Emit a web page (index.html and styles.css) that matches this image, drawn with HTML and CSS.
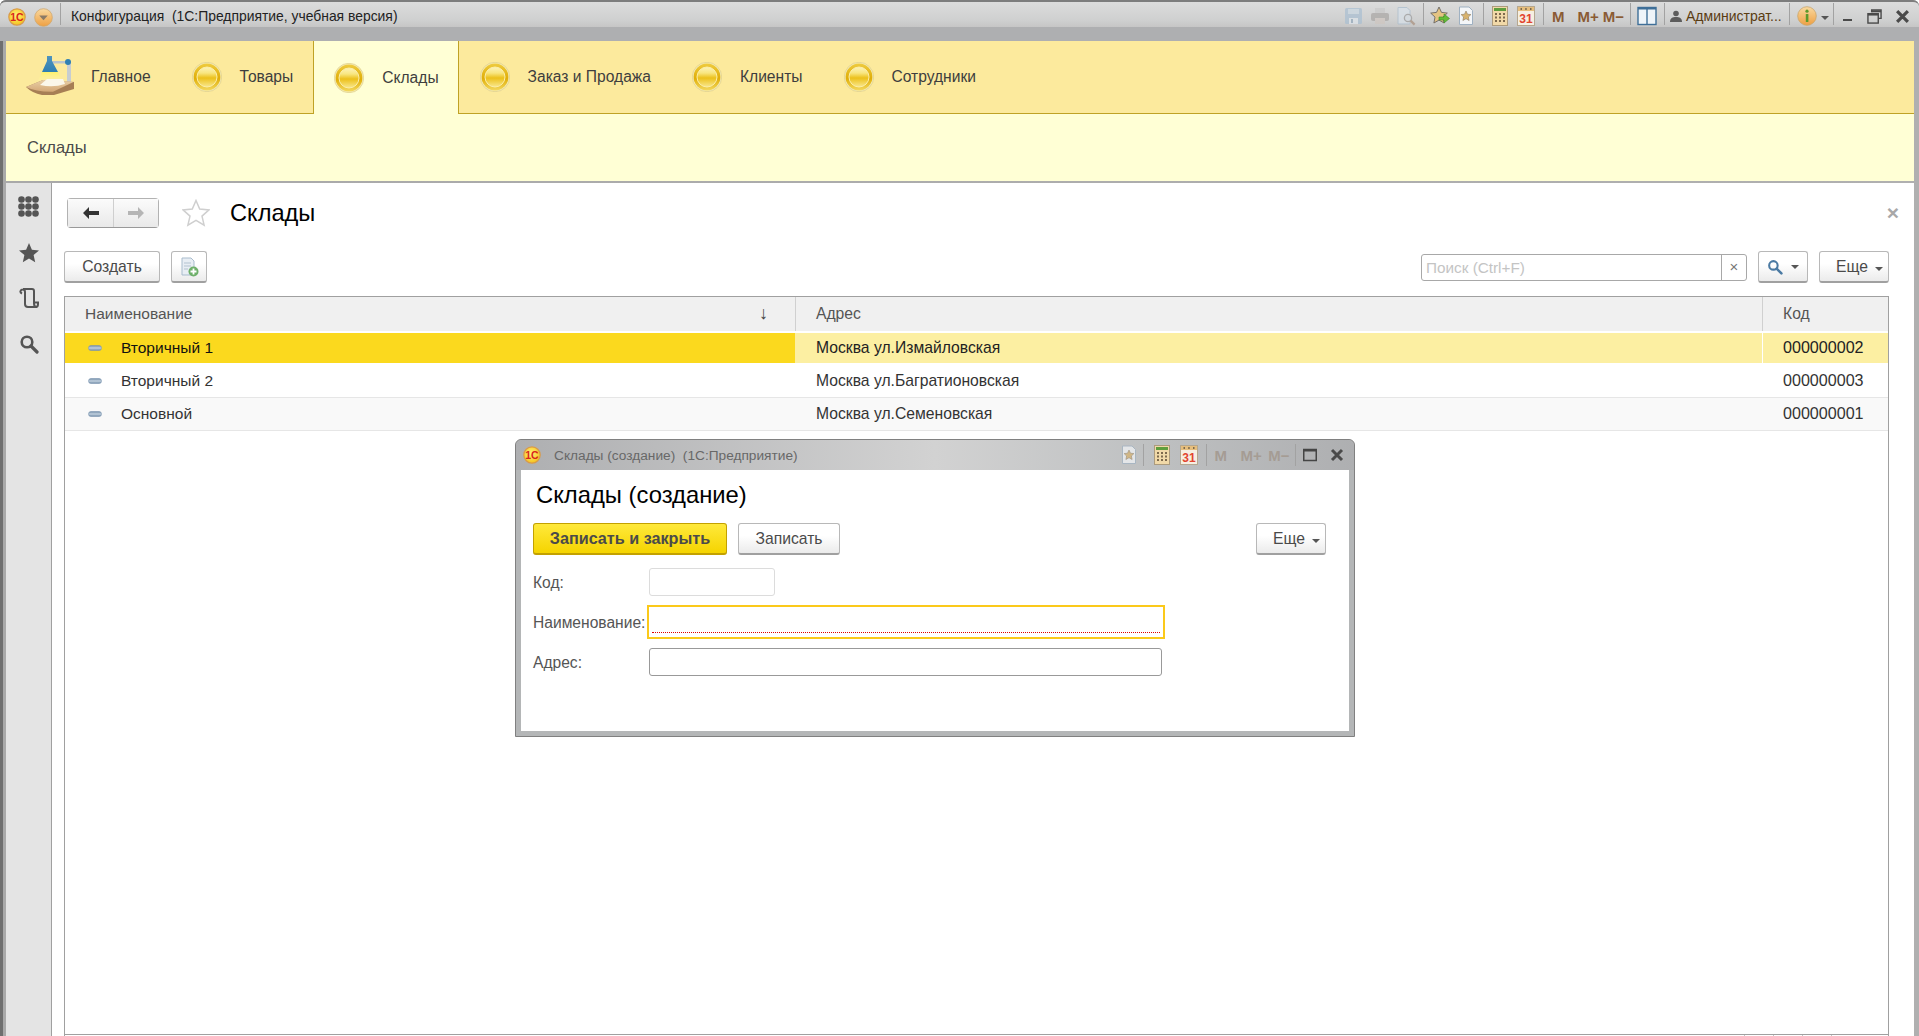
FILE: index.html
```html
<!DOCTYPE html>
<html lang="ru">
<head>
    <meta charset="UTF-8">
    <meta name="viewport" content="width=device-width, initial-scale=1.0">
    <title>Конфигурация (1С:Предприятие, учебная версия)</title>
    <link rel="stylesheet" href="styles.css">
</head>
<body>
    <!-- Shared icons -->
    <svg class="svg-defs" aria-hidden="true">
        <defs>
            <linearGradient id="goldOuter" x1="0" y1="0" x2="0" y2="1">
                <stop offset="0" stop-color="#eecb40"/>
                <stop offset="0.55" stop-color="#e0ae08"/>
                <stop offset="1" stop-color="#f3d85e"/>
            </linearGradient>
            <linearGradient id="goldInner" x1="0" y1="0" x2="0" y2="1">
                <stop offset="0" stop-color="#fdf3b8"/>
                <stop offset="0.3" stop-color="#f8e680"/>
                <stop offset="0.55" stop-color="#ecc01a"/>
                <stop offset="1" stop-color="#f9e88e"/>
            </linearGradient>
            <radialGradient id="logoFill" cx="0.45" cy="0.4" r="0.6">
                <stop offset="0" stop-color="#fff27a"/>
                <stop offset="1" stop-color="#f5c21c"/>
            </radialGradient>
            <linearGradient id="orangeFill" x1="0" y1="0" x2="0" y2="1">
                <stop offset="0" stop-color="#f9d9a0"/>
                <stop offset="1" stop-color="#eea043"/>
            </linearGradient>
            <linearGradient id="deskTop" x1="0" y1="0" x2="0" y2="1">
                <stop offset="0" stop-color="#e9cfa5"/>
                <stop offset="1" stop-color="#d3a877"/>
            </linearGradient>
            <linearGradient id="shade" x1="0" y1="0" x2="0" y2="1">
                <stop offset="0" stop-color="#4f94bd"/>
                <stop offset="1" stop-color="#2f7fb2"/>
            </linearGradient>
            <linearGradient id="beam" x1="0" y1="0" x2="0" y2="1">
                <stop offset="0" stop-color="#fff26a"/>
                <stop offset="1" stop-color="#fff5a8" stop-opacity="0.3"/>
            </linearGradient>
            <linearGradient id="pill" x1="0" y1="0" x2="0" y2="1">
                <stop offset="0" stop-color="#6f8aa5"/>
                <stop offset="0.5" stop-color="#c2d1df"/>
                <stop offset="1" stop-color="#6f8aa5"/>
            </linearGradient>
        </defs>

        <symbol id="i-gold" viewBox="0 0 30 30">
            <circle cx="15" cy="15" r="14.700" fill="#f7eeb8" stroke="#d6c680" stroke-width="0.600"/>
            <circle cx="15" cy="15" r="13.400" fill="url(#goldOuter)"/>
            <circle cx="15" cy="15" r="10" fill="url(#goldInner)" stroke="#fbeeaa"/>
        </symbol>
        <symbol id="i-save" viewBox="0 0 20 20">
            <rect x="1" y="2" width="17" height="16" rx="1.500" fill="#a9bfd2"/>
            <rect x="4" y="3" width="11" height="5" fill="#c9d7e2"/>
            <rect x="5" y="12" width="9" height="6" fill="#dfe6ec"/>
            <rect x="7" y="13" width="2" height="4" fill="#93a9bc"/>
        </symbol>
        <symbol id="i-print" viewBox="0 0 20 20">
            <rect x="5" y="2" width="10" height="6" fill="#c9c9c9"/>
            <rect x="1" y="7" width="18" height="8" rx="2" fill="#a9a6a4"/>
            <rect x="5" y="12" width="10" height="6" fill="#cfc6c0"/>
        </symbol>
        <symbol id="i-preview" viewBox="0 0 20 20">
            <path d="M2 1.500h9l3 3v13.500h-12z" fill="#d9e2ea" stroke="#a9bccd"/>
            <circle cx="12" cy="12" r="3.600" fill="#d5dde4" stroke="#9a9a9a" stroke-width="1.300"/>
            <path d="M14.600 14.600l4 4" stroke="#a88f7c" stroke-width="2.200"/>
        </symbol>
        <symbol id="i-star-go" viewBox="0 0 20 20">
            <path d="M9 1l2.500 5.400 5.800.7-4.300 4 1.100 5.900-5.100-2.900-5.100 2.900 1.100-5.900-4.300-4 5.800-.7z" fill="#e4c483" stroke="#75706a"/>
            <path d="M9 11h5v-3l5.500 4.500-5.500 4.500v-3h-5z" fill="#63bd38" stroke="#3e8a22" stroke-width="0.600"/>
        </symbol>
        <symbol id="i-doc-star" viewBox="0 0 20 20">
            <path d="M3.500 1h9.500l3.500 3.500v14h-13z" fill="#f4f6f8" stroke="#9fb1c2"/>
            <path d="M10 5l1.500 3.200 3.400.4-2.500 2.400.7 3.500-3.100-1.800-3.100 1.800.7-3.500-2.500-2.400 3.400-.4z" fill="#d8b26c" stroke="#8a7a63" stroke-width="0.600"/>
        </symbol>
        <symbol id="i-calc" viewBox="0 0 20 20">
            <rect x="2.500" y="0.500" width="15" height="19" fill="#f1d9a8" stroke="#ac9b7d"/>
            <rect x="4" y="2" width="12" height="3" fill="#5f9e3d"/>
            <path d="M5 7h2v2h-2zM9 7h2v2h-2zM13 7h2v2h-2zM5 10.500h2v2h-2zM9 10.500h2v2h-2zM13 10.500h2v2h-2zM5 14h2v2h-2zM9 14h2v2h-2zM13 14h2v2h-2z" fill="#7d6a4e"/>
        </symbol>
        <symbol id="i-cal-page" viewBox="0 0 20 20">
            <rect x="1.500" y="0.500" width="17" height="19" fill="#f6efe2" stroke="#b5a78f"/>
            <rect x="2" y="1" width="16" height="4" fill="#e6be7d"/>
            <path d="M4.500 2h1.500v2h-1.500zM9.200 2h1.500v2h-1.500zM14 2h1.500v2h-1.500z" fill="#7d6a4e"/>
        </symbol>
        <symbol id="i-panel" viewBox="0 0 20 20">
            <rect x="1" y="1.500" width="18" height="17" fill="#eef4f9" stroke="#3f6f98" stroke-width="1.400"/>
            <rect x="1" y="1" width="18" height="2.500" fill="#3f6f98"/>
            <path d="M10 3v15" stroke="#3f6f98" stroke-width="1.400"/>
        </symbol>
        <symbol id="i-info" viewBox="0 0 20 20">
            <circle cx="10" cy="10" r="9.300" fill="url(#orangeFill)" stroke="#c9a66c" stroke-width="0.800"/>
            <rect x="8.800" y="8" width="2.600" height="8" rx="0.600" fill="#5d9a2c"/>
            <circle cx="10" cy="5.200" r="1.600" fill="#5d9a2c"/>
        </symbol>
        <symbol id="i-close" viewBox="0 0 14 14">
            <path d="M2 2l10 10M12 2l-10 10" stroke="#4a4a4a" stroke-width="3"/>
        </symbol>
        <symbol id="i-maximize" viewBox="0 0 14 14">
            <rect x="0.750" y="1.500" width="12.500" height="11" fill="none" stroke="#454545" stroke-width="1.500"/>
            <path d="M1 2.500h12" stroke="#454545" stroke-width="2"/>
        </symbol>
        <symbol id="i-search" viewBox="0 0 20 20">
            <circle cx="8" cy="8" r="5.300" fill="none" stroke="currentColor" stroke-width="2.600"/>
            <path d="M12 12l6 6" stroke="currentColor" stroke-width="3.200" stroke-linecap="round"/>
        </symbol>
        <symbol id="i-dash" viewBox="0 0 14 6">
            <rect x="0.500" y="0.500" width="13" height="5" rx="2.500" fill="url(#pill)" stroke="#7f99b3" stroke-width="0.600"/>
        </symbol>
    </svg>

    <div class="app">
        <!-- Main window title bar -->
        <header class="titlebar">
            <svg class="logo" viewBox="0 0 18 18">
                <circle cx="9" cy="9" r="8.200" fill="url(#logoFill)" stroke="#d99a4a" stroke-width="1.200"/>
                <text x="9" y="12.800" text-anchor="middle" class="logo-text">1С</text>
            </svg>
            <svg class="menu-ball" viewBox="0 0 20 20">
                <circle cx="10" cy="10" r="9.300" fill="url(#orangeFill)" stroke="#cfa66c" stroke-width="0.800"/>
                <path d="M5.500 8h9l-4.500 5z" fill="#8b7a66"/>
            </svg>
            <span class="title-sep"></span>
            <span class="window-title">Конфигурация&nbsp; (1С:Предприятие, учебная версия)</span>

            <div class="tools">
                <svg class="tool faded"><use href="#i-save"/></svg>
                <svg class="tool faded"><use href="#i-print"/></svg>
                <svg class="tool faded"><use href="#i-preview"/></svg>
                <span class="tool-sep"></span>
                <svg class="tool"><use href="#i-star-go"/></svg>
                <svg class="tool"><use href="#i-doc-star"/></svg>
                <span class="tool-sep"></span>
                <svg class="tool"><use href="#i-calc"/></svg>
                <svg class="tool" viewBox="0 0 20 20">
                    <use href="#i-cal-page"/>
                    <text x="10" y="17" text-anchor="middle" class="cal-text">31</text>
                </svg>
                <span class="tool-sep"></span>
                <span class="mem mem-m">M</span>
                <span class="mem">M+</span>
                <span class="mem">M−</span>
                <span class="tool-sep"></span>
                <svg class="tool"><use href="#i-panel"/></svg>
                <span class="tool-sep"></span>
                <svg class="user-icon" viewBox="0 0 12 12">
                    <circle cx="6" cy="3.500" r="2.800" fill="#5c5c5c"/>
                    <path d="M0 12c0-4 2.500-5 6-5s6 1 6 5z" fill="#5c5c5c"/>
                </svg>
                <span class="user-name">Администрат...</span>
                <span class="tool-sep"></span>
                <svg class="tool"><use href="#i-info"/></svg>
                <span class="caret"></span>
                <span class="tool-sep"></span>
                <span class="win-min"></span>
                <svg class="win-restore" viewBox="0 0 16 16">
                    <path d="M5 3.500v-2.500h10v9h-3" fill="none" stroke="#4a4a4a" stroke-width="1.500"/>
                    <path d="M5 2.500h10" stroke="#4a4a4a" stroke-width="2"/>
                    <rect x="1" y="5" width="11" height="10" fill="none" stroke="#4a4a4a" stroke-width="1.500"/>
                    <path d="M1 6h11" stroke="#4a4a4a" stroke-width="2"/>
                </svg>
                <svg class="win-close"><use href="#i-close"/></svg>
            </div>
        </header>

        <!-- Sections -->
        <nav class="sections">
            <a class="section">
                <svg class="lamp" viewBox="0 0 48 42">
                    <path d="M16 16h16l4 9h-24z" fill="url(#beam)"/>
                    <rect x="25" y="5" width="16" height="2.500" fill="#b9c4cb"/>
                    <rect x="41" y="6" width="4" height="20" fill="#c7cdd1"/>
                    <circle cx="42" cy="6" r="3" fill="#2f7fb2"/>
                    <path d="M21 0h5v5l6 11h-16l5-11z" fill="url(#shade)"/>
                    <path d="M0 31l17-7 31 2v7l-20 6h-12q-10-2-16-8z" fill="#a77f55"/>
                    <path d="M0 31l17-7 31 1.700-21 10q-17 .3-27-4.700z" fill="url(#deskTop)"/>
                    <path d="M14 29l7-6h16l2 5q-12 4-25 1z" fill="#fbf7ea"/>
                </svg>
                <span>Главное</span>
            </a>
            <a class="section"><svg class="ball"><use href="#i-gold"/></svg><span>Товары</span></a>
            <a class="section section-active"><svg class="ball"><use href="#i-gold"/></svg><span>Склады</span></a>
            <a class="section"><svg class="ball"><use href="#i-gold"/></svg><span>Заказ и Продажа</span></a>
            <a class="section"><svg class="ball"><use href="#i-gold"/></svg><span>Клиенты</span></a>
            <a class="section"><svg class="ball"><use href="#i-gold"/></svg><span>Сотрудники</span></a>
        </nav>

        <div class="subsections">Склады</div>

        <div class="workspace">
            <!-- Left panel -->
            <aside class="sidebar">
                <svg class="side-icon side-grid" viewBox="0 0 21 21">
                    <g fill="#555">
                        <circle cx="3.500" cy="3.500" r="3.300"/><circle cx="10.500" cy="3.500" r="3.300"/><circle cx="17.500" cy="3.500" r="3.300"/>
                        <circle cx="3.500" cy="10.500" r="3.300"/><circle cx="10.500" cy="10.500" r="3.300"/><circle cx="17.500" cy="10.500" r="3.300"/>
                        <circle cx="3.500" cy="17.500" r="3.300"/><circle cx="10.500" cy="17.500" r="3.300"/><circle cx="17.500" cy="17.500" r="3.300"/>
                    </g>
                </svg>
                <svg class="side-icon" viewBox="0 0 20 20">
                    <path d="M10 0l2.900 6.700 7.100.7-5.400 4.700 1.600 7.100-6.200-3.800-6.200 3.800 1.600-7.100-5.400-4.700 7.100-.7z" fill="#555"/>
                </svg>
                <svg class="side-icon" viewBox="0 0 20 20">
                    <path d="M4 1h9q2 0 2 2v12.500q0 3.500 3 3.500h-9q-3 0-3-3v-12q0-2.500-2-2.500t-2.500 1.500 1.500 2.500" fill="none" stroke="#555" stroke-width="2"/>
                    <path d="M15 14.500h4v1.500q0 3-2 3" fill="none" stroke="#555" stroke-width="2"/>
                </svg>
                <svg class="side-icon side-search"><use href="#i-search"/></svg>
            </aside>

            <main class="content">
                <div class="page-head">
                    <div class="history">
                        <button class="history-btn">
                            <svg class="arrow" viewBox="0 0 18 14"><path d="M1 7l6-6v4h10v4h-10v4z" fill="#333"/></svg>
                        </button>
                        <button class="history-btn">
                            <svg class="arrow" viewBox="0 0 18 14"><path d="M17 7l-6-6v4h-10v4h10v4z" fill="#b5b5b5"/></svg>
                        </button>
                    </div>
                    <svg class="fav-star" viewBox="0 0 28 28">
                        <path d="M14 1.500l3.700 8.500 9.300 .9-7 6.200 2.100 9.100-8.100-4.800-8.100 4.800 2.100-9.100-7-6.200 9.300-.9z" fill="#fff" stroke="#cfcfcf" stroke-width="1.500"/>
                    </svg>
                    <h1 class="page-title">Склады</h1>
                    <span class="page-close">×</span>
                </div>

                <div class="toolbar">
                    <button class="btn btn-create">Создать</button>
                    <button class="btn btn-icon">
                        <svg class="doc-add" viewBox="0 0 20 20">
                            <path d="M3 1h9l3 3v14h-12z" fill="#e8eef4" stroke="#a9bccd"/>
                            <path d="M5 6h7M5 9h7M5 12h4" stroke="#b3c2d0"/>
                            <circle cx="14.500" cy="14.500" r="5" fill="#6eb06a"/>
                            <path d="M14.500 11.500v6M11.500 14.500h6" stroke="#fff" stroke-width="1.800"/>
                        </svg>
                    </button>
                    <div class="search-box">
                        <span class="search-input">Поиск (Ctrl+F)</span>
                        <span class="search-clear">×</span>
                    </div>
                    <button class="btn btn-search">
                        <svg class="search-glyph"><use href="#i-search"/></svg>
                        <span class="caret"></span>
                    </button>
                    <button class="btn btn-more">Еще <span class="caret"></span></button>
                </div>

                <!-- List -->
                <div class="list">
                    <div class="list-row list-head">
                        <div class="cell cell-name">Наименование<span class="sort-arrow">↓</span></div>
                        <div class="cell cell-addr">Адрес</div>
                        <div class="cell cell-code">Код</div>
                    </div>
                    <div class="list-row row-current">
                        <div class="cell cell-name"><svg class="dash"><use href="#i-dash"/></svg>Вторичный 1</div>
                        <div class="cell cell-addr">Москва ул.Измайловская</div>
                        <div class="cell cell-code">000000002</div>
                    </div>
                    <div class="list-row">
                        <div class="cell cell-name"><svg class="dash"><use href="#i-dash"/></svg>Вторичный 2</div>
                        <div class="cell cell-addr">Москва ул.Багратионовская</div>
                        <div class="cell cell-code">000000003</div>
                    </div>
                    <div class="list-row row-alt">
                        <div class="cell cell-name"><svg class="dash"><use href="#i-dash"/></svg>Основной</div>
                        <div class="cell cell-addr">Москва ул.Семеновская</div>
                        <div class="cell cell-code">000000001</div>
                    </div>
                    <div class="list-fill"></div>
                    <div class="list-foot"><span></span><span></span><span></span><span></span></div>
                </div>
            </main>
        </div>
    </div>

    <!-- Create dialog -->
    <section class="dialog">
        <div class="dialog-bar">
            <svg class="logo" viewBox="0 0 18 18">
                <circle cx="9" cy="9" r="8.200" fill="url(#logoFill)" stroke="#d99a4a" stroke-width="1.200"/>
                <text x="9" y="12.800" text-anchor="middle" class="logo-text">1С</text>
            </svg>
            <span class="dialog-caption">Склады (создание)&nbsp; (1С:Предприятие)</span>
            <div class="dialog-tools">
                <svg class="tool faded"><use href="#i-doc-star"/></svg>
                <span class="tool-sep"></span>
                <svg class="tool"><use href="#i-calc"/></svg>
                <svg class="tool" viewBox="0 0 20 20">
                    <use href="#i-cal-page"/>
                    <text x="10" y="17" text-anchor="middle" class="cal-text">31</text>
                </svg>
                <span class="tool-sep"></span>
                <span class="mem mem-m faded-mem">M</span>
                <span class="mem faded-mem">M+</span>
                <span class="mem faded-mem">M−</span>
                <span class="tool-sep"></span>
                <svg class="dialog-win"><use href="#i-maximize"/></svg>
                <svg class="dialog-win dialog-x"><use href="#i-close"/></svg>
            </div>
        </div>
        <div class="dialog-body">
            <h2 class="dialog-title">Склады (создание)</h2>
            <div class="dialog-actions">
                <button class="btn btn-primary">Записать и закрыть</button>
                <button class="btn btn-save">Записать</button>
                <button class="btn btn-more btn-more-dialog">Еще <span class="caret"></span></button>
            </div>
            <div class="form">
                <label class="form-label">Код:</label>
                <div class="field field-code"></div>
                <label class="form-label">Наименование:</label>
                <div class="field-focus"><div class="field-required"></div></div>
                <label class="form-label">Адрес:</label>
                <div class="field field-addr"></div>
            </div>
        </div>
    </section>
</body>
</html>
```

FILE: styles.css
```css
:root {
    --tab-bg: #fcea9d;
    --panel-bg: #ffffd5;
    --tab-line: #bfa225;
    --text: #444;
    --line: #a0a0a0;
}

* {
    box-sizing: border-box;
}

html, body {
    height: 100%;
}

body {
    margin: 0;
    overflow: hidden;
    background: #fff;
    font-family: "Liberation Sans", Arial, sans-serif;
    font-size: 15.600px;
    color: var(--text);
}

.svg-defs {
    position: absolute;
    width: 0;
    height: 0;
}

.logo-text {
    font: bold 10.500px "Liberation Sans", Arial, sans-serif;
    fill: #d8261c;
}

.cal-text {
    font: bold 12px "Liberation Sans", Arial, sans-serif;
    fill: #e2452f;
}

.app {
    display: flex;
    flex-direction: column;
    height: 100%;
    padding: 0 5px 0 6px;
    border-radius: 6px 6px 0 0;
    background: linear-gradient(to right, #6f6f6f 0, #6f6f6f 3px, #a9a9a9 3px, #b0b0b0 100%);
}

/* Title bar */
.titlebar {
    display: flex;
    align-items: flex-start;
    height: 41px;
    flex: none;
    margin: 0 -5px 0 -6px;
    padding: 4px 9px 0 8px;
    border-top: 2px solid #7d7d7d;
    border-radius: 6px 6px 0 0;
    background:
        linear-gradient(to bottom, #dcdcdc 0, #cfd0d0 18px, #c6c6c6 25px, #aeafb1 25px, #aeafb1 100%);
}

.logo {
    flex: none;
    width: 18px;
    height: 18px;
    margin-top: 2px;
}

.menu-ball {
    flex: none;
    width: 19px;
    height: 19px;
    margin: 2px 0 0 8px;
}

.title-sep {
    flex: none;
    width: 1px;
    height: 22px;
    margin: -3px 10px 0 7px;
    background: #a2a2a2;
}

.window-title {
    color: #222;
    font-size: 13.900px;
    line-height: 20px;
}

.tools,
.dialog-tools {
    display: flex;
    align-items: center;
    margin-left: auto;
}

.tools {
    height: 20px;
}

.tool {
    flex: none;
    width: 20px;
    height: 20px;
    margin: 0 3px;
}

.faded {
    opacity: 0.7;
}

.tool-sep {
    flex: none;
    width: 1px;
    height: 22px;
    margin: 0 3.500px 4px;
    background: #a2a2a2;
}

.mem {
    margin: 0 2px;
    color: #8a5b34;
    font-size: 15px;
    font-weight: bold;
}

.mem-m {
    margin: 0 11px 0 4.500px;
}

.faded-mem {
    color: #a59c94;
}

.user-icon {
    flex: none;
    width: 12px;
    height: 12px;
    margin: 0 4px 0 2px;
}

.user-name {
    width: 96px;
    margin-right: 3.500px;
    color: #5a3c12;
    font-size: 14px;
    white-space: nowrap;
}

.caret {
    display: inline-block;
    width: 0;
    height: 0;
    border-style: solid;
    border-width: 4px 4px 0;
    border-color: #555 transparent transparent;
}

.tools .caret {
    margin: 4px 1px 0;
}

.win-min {
    width: 9px;
    height: 2px;
    margin: 8px 15px 0 5.500px;
    background: #4a4a4a;
}

.win-restore {
    width: 15px;
    height: 15px;
}

.win-close {
    width: 15px;
    height: 15px;
    margin-left: 13px;
}

/* Section tabs */
.sections {
    display: flex;
    flex: none;
    height: 73px;
    border-bottom: 1px solid var(--tab-line);
    background: var(--tab-bg);
}

.section {
    display: flex;
    align-items: center;
    padding: 0 19px 0 20px;
    border-right: 1px solid transparent;
    border-left: 1px solid transparent;
    color: #3e3e3e;
    font-size: 15.600px;
}

.section:first-child {
    border-left: 0;
}

.section-active {
    border-color: var(--tab-line);
    margin-bottom: -1px;
    background: var(--panel-bg);
}

.lamp {
    width: 48px;
    height: 42px;
    margin-right: 17px;
}

.ball {
    flex: none;
    width: 30px;
    height: 30px;
    margin-right: 18px;
}

.subsections {
    flex: none;
    height: 67px;
    padding: 24px 0 0 21px;
    background: var(--panel-bg);
    color: #4a4a4a;
    font-size: 16.500px;
    line-height: 18px;
}

/* Workspace */
.workspace {
    display: flex;
    flex: 1;
    min-height: 0;
    margin-top: 2px;
}

.sidebar {
    display: flex;
    flex: none;
    flex-direction: column;
    align-items: center;
    gap: 25.500px;
    width: 46px;
    padding-top: 13px;
    border-right: 1px solid var(--line);
    background: #e4e4e4;
}

.side-icon {
    flex: none;
    width: 20px;
    height: 20px;
}

.side-grid {
    width: 21px;
    height: 21px;
}

.side-search {
    color: #555;
}

.content {
    display: flex;
    flex: 1;
    flex-direction: column;
    min-width: 0;
    padding: 15px 25px 0 12px;
    background: #fff;
}

.page-head {
    display: flex;
    align-items: center;
    flex: none;
    height: 30px;
    margin-left: 3px;
}

.history {
    display: flex;
    height: 30px;
    border: 1px solid #b2b2b2;
    border-bottom-color: #999;
    border-radius: 4px;
}

.history-btn {
    width: 45px;
    padding: 0;
    border: 0;
    background: linear-gradient(#fbfbfb, #e9e9e9);
}

.history-btn + .history-btn {
    border-left: 1px solid #cfcfcf;
}

.arrow {
    display: block;
    width: 18px;
    height: 14px;
    margin: 0 auto;
}

.fav-star {
    width: 28px;
    height: 28px;
    margin-left: 23px;
}

.page-title {
    margin: 0 0 0 20px;
    color: #000;
    font-size: 23.600px;
    font-weight: normal;
}

.page-close {
    margin: 0 -10px 0 auto;
    color: #a8a8a8;
    font-size: 21px;
    font-weight: bold;
}

/* Buttons */
.btn {
    height: 32px;
    padding: 0;
    border: 1px solid #b8b8b8;
    border-bottom: 2px solid #a0a0a0;
    border-radius: 3px;
    background: linear-gradient(#fff 40%, #ebebeb);
    color: #4a4a4a;
    font-family: inherit;
    font-size: 15.700px;
}

.toolbar {
    display: flex;
    align-items: center;
    flex: none;
    gap: 11px;
    margin-top: 23px;
}

.btn-create {
    width: 96px;
}

.btn-icon {
    width: 36px;
}

.doc-add {
    display: block;
    width: 20px;
    height: 20px;
    margin: 0 auto;
}

.search-box {
    display: flex;
    width: 326px;
    height: 27px;
    margin-left: auto;
    border: 1px solid #a8a8a8;
    border-radius: 3px;
}

.search-input {
    flex: 1;
    padding-left: 4px;
    color: #c4c4c4;
    font-size: 15.300px;
    line-height: 25px;
}

.search-clear {
    width: 25px;
    border-left: 1px solid #a8a8a8;
    color: #777;
    font-size: 15px;
    line-height: 24px;
    text-align: center;
}

.btn-search {
    display: flex;
    align-items: center;
    justify-content: center;
    gap: 8px;
    width: 50px;
}

.search-glyph {
    width: 16px;
    height: 16px;
    color: #4b7aa3;
}

.btn-more {
    width: 70px;
    padding-left: 16px;
    text-align: left;
}

.btn-more .caret {
    margin-left: 3px;
    vertical-align: 1px;
}

/* List */
.list {
    display: flex;
    flex: 1;
    flex-direction: column;
    min-height: 0;
    margin-top: 13px;
    border: 1px solid var(--line);
    border-bottom: 0;
}

.list-row {
    display: grid;
    flex: none;
    grid-template-columns: 730px 967px 1fr;
    height: 33px;
    border-bottom: 1px solid #e6e6e6;
    color: #333;
}

.cell {
    display: flex;
    align-items: center;
    padding-bottom: 1px;
    font-size: 15.700px;
}

.cell-name {
    padding-left: 23px;
    font-size: 15.500px;
}

.cell-addr,
.cell-code {
    padding-left: 21px;
}

.cell-code {
    font-size: 16.100px;
}

.list-head {
    height: 36px;
    border-bottom: 2px solid #fff;
    background: #f0f0f0;
    color: #555;
}

.list-head .cell-name {
    justify-content: space-between;
    padding: 0 27px 1px 20px;
}

.list-head .cell-addr,
.list-head .cell-code {
    padding-left: 20px;
    border-left: 1px solid #d0d0d0;
    font-size: 15.700px;
}

.sort-arrow {
    color: #444;
    font-size: 18px;
}

.row-current {
    height: 32px;
    border-bottom: 2px solid #fff;
    background: #fcefa2;
    color: #222;
}

.row-current .cell-name {
    background: #fbd91e;
    color: #111;
}

.row-current .cell-code {
    padding-left: 20px;
    border-left: 1px solid #fff;
}

.row-alt {
    background: #f9f9f9;
}

.dash {
    flex: none;
    width: 14px;
    height: 6px;
    margin-right: 19px;
}

.list-fill {
    flex: 1;
}

.list-foot {
    display: flex;
    flex: none;
    justify-content: flex-end;
    height: 2px;
    padding-right: 28px;
    border-top: 1px solid var(--line);
}

.list-foot span {
    width: 29px;
    border-left: 1px solid #c4c4c4;
}

/* Dialog window */
.dialog {
    position: absolute;
    top: 439px;
    left: 515px;
    display: flex;
    flex-direction: column;
    width: 840px;
    height: 298px;
    padding: 0 5px 5px;
    border: 1px solid #808080;
    border-radius: 6px 6px 0 0;
    background: #b4b6b7;
}

.dialog-bar {
    display: flex;
    align-items: center;
    flex: none;
    height: 30px;
    margin: 0 -5px;
    padding: 0 10px 0 7px;
    border-radius: 6px 6px 0 0;
    background: linear-gradient(to right, #aeafb1, #d2d2d2 50%, #bfc1c2 75%, #aeafb1);
}

.dialog-bar .logo {
    margin-top: 0;
}

.dialog-caption {
    margin-left: 13px;
    color: #686868;
    font-size: 13.700px;
}

.dialog-tools .tool {
    margin: 0 3.500px;
}

.dialog-tools .faded {
    margin-right: 0;
}

.dialog-tools .tool-sep {
    margin: 0 4px;
}

.dialog-tools .mem {
    margin: 0 1.500px 0 5px;
}

.dialog-tools .mem-m {
    margin: 0 8.500px 0 3px;
}

.dialog-win {
    flex: none;
    width: 14px;
    height: 14px;
    margin-left: 3px;
}

.dialog-x {
    margin-left: 13px;
}

.dialog-body {
    flex: 1;
    padding: 10px 23px 0 12px;
    background: #fff;
}

.dialog-title {
    margin: 0 0 0 3px;
    color: #000;
    font-size: 23.800px;
    font-weight: normal;
    line-height: 30px;
}

.dialog-actions {
    display: flex;
    gap: 11px;
    margin-top: 13px;
}

.btn-primary {
    width: 194px;
    border-color: #c3a100;
    background: linear-gradient(#ffe93b, #f5d400);
    color: #4a4a4a;
    font-size: 16.200px;
    font-weight: bold;
}

.btn-save {
    width: 102px;
}

.btn-more-dialog {
    margin-left: auto;
}

.form {
    display: grid;
    grid-template-columns: 116px 1fr;
    grid-auto-rows: 40px;
    align-items: center;
    margin-top: 7px;
}

.form-label {
    padding-top: 1px;
    color: #555;
    font-size: 15.600px;
    white-space: nowrap;
}

.field {
    height: 28px;
    border: 1px solid #999;
    border-radius: 3px;
}

.field-code {
    width: 126px;
    border-color: #dcdcdc;
}

.field-addr {
    width: 513px;
}

.field-focus {
    width: 518px;
    height: 34px;
    margin-left: -2px;
    padding: 0 3px;
    border: 2px solid #fbc91a;
}

.field-required {
    height: 26px;
    border-bottom: 1px dotted #e00000;
}
```
